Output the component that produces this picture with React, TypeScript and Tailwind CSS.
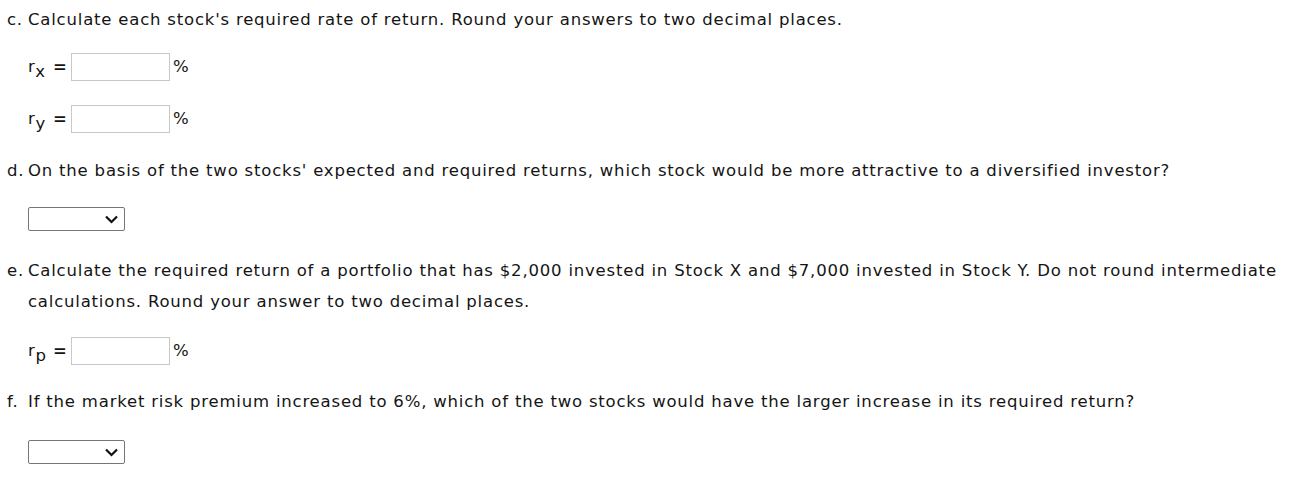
export default function App() {
  const font = { fontFamily: '"DejaVu Sans", Verdana, sans-serif' };

  const Question = ({ label, children }: { label: string; children: React.ReactNode }) => (
    <div className="flex leading-[31px]">
      <span className="w-[21px] shrink-0">{label}</span>
      <span>{children}</span>
    </div>
  );

  const Answer = ({ sub }: { sub: string }) => (
    <div className="flex items-center pl-[21px] h-[28px]">
      <span className="w-[25px] whitespace-nowrap">
        r<span className="relative top-[5px]">{sub}</span>
      </span>
      <span className="w-[18px] font-bold">=</span>
      <input
        type="text"
        className="w-[99px] h-[28px] border border-[#c8c8c8] bg-white outline-none"
      />
      <span className="ml-[3px]">%</span>
    </div>
  );

  const Select = () => (
    <div className="pl-[21px]">
      <div className="relative w-[97px] h-[24px] border border-[#767676] rounded-[2px] bg-white">
        <svg
          className="absolute right-[5px] top-[7px]"
          width="15"
          height="9"
          viewBox="0 0 15 9"
          fill="none"
        >
          <path d="M2 1.5 L7.5 7 L13 1.5" stroke="#111" strokeWidth="2.2" />
        </svg>
      </div>
    </div>
  );

  return (
    <div style={font} className="bg-white text-[#141414] text-[16.5px] tracking-[0.8px] pl-[7px] pt-[4px] w-[1298px] h-[486px]">
      <Question label="c.">
        Calculate each stock's required rate of return. Round your answers to two decimal places.
      </Question>
      <div className="mt-[18px]">
        <Answer sub="x" />
      </div>
      <div className="mt-[24px]">
        <Answer sub="y" />
      </div>
      <div className="mt-[22px]">
        <Question label="d.">
          On the basis of the two stocks' expected and required returns, which stock would be more attractive to a diversified investor?
        </Question>
      </div>
      <div className="mt-[21px]">
        <Select />
      </div>
      <div className="mt-[24px]">
        <Question label="e.">
          Calculate the required return of a portfolio that has $2,000 invested in Stock X and $7,000 invested in Stock Y. Do not round intermediate calculations. Round your answer to two decimal places.
        </Question>
      </div>
      <div className="mt-[20px]">
        <Answer sub="p" />
      </div>
      <div className="mt-[21px]">
        <Question label="f.">
          If the market risk premium increased to 6%, which of the two stocks would have the larger increase in its required return?
        </Question>
      </div>
      <div className="mt-[23px]">
        <Select />
      </div>
    </div>
  );
}
